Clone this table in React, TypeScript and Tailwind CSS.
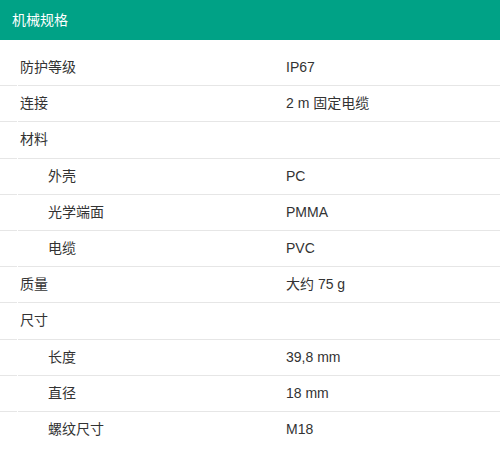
const rows: { label: string; value?: string; sub?: boolean }[] = [
  { label: "防护等级", value: "IP67" },
  { label: "连接", value: "2 m 固定电缆" },
  { label: "材料" },
  { label: "外壳", value: "PC", sub: true },
  { label: "光学端面", value: "PMMA", sub: true },
  { label: "电缆", value: "PVC", sub: true },
  { label: "质量", value: "大约 75 g" },
  { label: "尺寸" },
  { label: "长度", value: "39,8 mm", sub: true },
  { label: "直径", value: "18 mm", sub: true },
  { label: "螺纹尺寸", value: "M18", sub: true },
];

export default function App() {
  return (
    <div
      className="w-[500px] h-[450px] overflow-hidden bg-white text-[14px] text-[#333333]"
      style={{ fontFamily: '"Liberation Sans", Arial, "Noto Sans CJK SC", sans-serif' }}
    >
      <div className="h-[40px] bg-[#00a286] text-white flex items-center px-3">机械规格</div>
      <div className="mt-[10px]">
        {rows.map((r, i) => {
          const line = i < rows.length - 1 ? "border-b border-[#e6e6e6]" : "";
          return (
            <div key={i} className="flex h-[36.2px]">
              <div className={`w-[17px] ${line}`} />
              <div className={`flex-1 ml-px flex items-center ${line}`}>
                <div className={r.sub ? "w-[268px] pl-[30px]" : "w-[268px] pl-[2px]"}>{r.label}</div>
                <div>{r.value}</div>
              </div>
            </div>
          );
        })}
      </div>
    </div>
  );
}
